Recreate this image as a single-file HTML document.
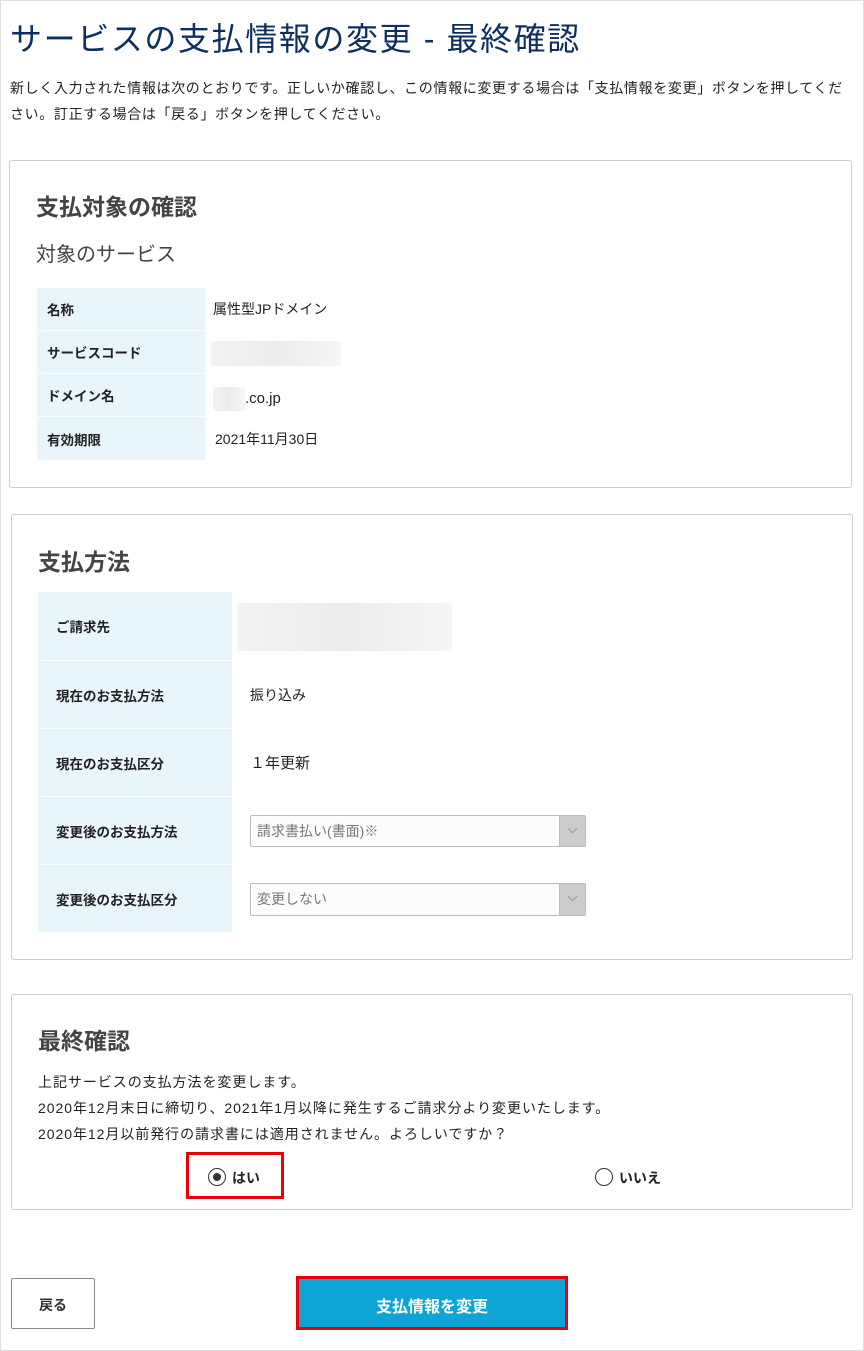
<!DOCTYPE html>
<html><head><meta charset="utf-8"><style>
*{margin:0;padding:0;box-sizing:border-box}
body{width:864px;height:1351px;position:relative;background:#fff;font-family:"Liberation Sans","Noto Sans CJK JP",sans-serif;color:#222;overflow:hidden}
.frame{position:absolute;left:0;top:0;width:864px;height:1351px;border:1px solid #ddd}
.a{position:absolute;white-space:nowrap}
h1{position:absolute;left:10px;top:19px;font-size:32px;letter-spacing:1.6px;font-weight:normal;color:#0c2f5e;line-height:40px}
.p{left:10px;font-size:14px;letter-spacing:0.65px;line-height:26px}
.box{position:absolute;border:1px solid #ccc;border-radius:3px}
.h2{font-size:23px;font-weight:bold;color:#444}
.h3{font-size:20px;color:#444}
.lab{position:absolute;background:#e8f6fc;font-size:13.5px;font-weight:bold;padding-left:10px;display:flex;align-items:center}
.val{position:absolute;font-size:14px;display:flex;align-items:center}
.sel{position:absolute;border:1px solid #bbb;border-radius:2px;background:#fcfcfc;font-size:14px;color:#777;padding-left:6px;line-height:30px}
.sel i{position:absolute;right:0;top:0;width:26px;height:100%;background:#ccc;border-left:1px solid #bbb}
.sel i:after{content:"";position:absolute;left:9px;top:9px;width:6px;height:6px;border-right:1px solid #999;border-bottom:1px solid #999;transform:rotate(45deg)}
.blur{position:absolute;background:linear-gradient(90deg,#f3f3f3,#ececec,#f6f6f6)}
.radio{position:absolute;width:18px;height:18px;border:1px solid #333;border-radius:50%;background:#fff}
</style></head><body>
<div class="frame"></div>
<h1>サービスの支払情報の変更 - 最終確認</h1>
<div class="a p" style="top:75px">新しく入力された情報は次のとおりです。正しいか確認し、この情報に変更する場合は「支払情報を変更」ボタンを押してくだ</div>
<div class="a p" style="top:101px">さい。訂正する場合は「戻る」ボタンを押してください。</div>

<div class="box" style="left:9px;top:160px;width:843px;height:328px"></div>
<div class="a h2" style="left:36px;top:188px">支払対象の確認</div>
<div class="a h3" style="left:36px;top:238px">対象のサービス</div>
<div class="lab" style="left:37px;top:288px;width:168px;height:42px">名称</div>
<div class="lab" style="left:37px;top:331px;width:168px;height:42px">サービスコード</div>
<div class="lab" style="left:37px;top:374px;width:168px;height:42px">ドメイン名</div>
<div class="lab" style="left:37px;top:417px;width:168px;height:43px">有効期限</div>
<div class="val" style="left:213px;top:288px;height:42px">属性型JPドメイン</div>
<div class="blur" style="left:211px;top:341px;width:130px;height:25px"></div>
<div class="blur" style="left:213px;top:387px;width:32px;height:24px"></div>
<div class="val" style="left:245px;top:377px;height:42px;font-size:15px">.co.jp</div>
<div class="val" style="left:215px;top:417px;height:43px">2021年11月30日</div>

<div class="box" style="left:11px;top:514px;width:842px;height:446px"></div>
<div class="a h2" style="left:38px;top:543px">支払方法</div>
<div class="lab" style="left:38px;top:592px;width:194px;height:68px;padding-left:18px">ご請求先</div>
<div class="lab" style="left:38px;top:661px;width:194px;height:67px;padding-left:18px">現在のお支払方法</div>
<div class="lab" style="left:38px;top:729px;width:194px;height:67px;padding-left:18px">現在のお支払区分</div>
<div class="lab" style="left:38px;top:797px;width:194px;height:67px;padding-left:18px">変更後のお支払方法</div>
<div class="lab" style="left:38px;top:865px;width:194px;height:67px;padding-left:18px">変更後のお支払区分</div>
<div class="blur" style="left:237px;top:603px;width:215px;height:48px"></div>
<div class="val" style="left:250px;top:661px;height:67px">振り込み</div>
<div class="val" style="left:250px;top:729px;height:67px;font-size:15px">１年更新</div>
<div class="sel" style="left:250px;top:815px;width:336px;height:32px">請求書払い(書面)※<i></i></div>
<div class="sel" style="left:250px;top:883px;width:336px;height:33px">変更しない<i></i></div>

<div class="box" style="left:11px;top:994px;width:842px;height:216px"></div>
<div class="a h2" style="left:38px;top:1022px">最終確認</div>
<div class="a" style="left:38px;top:1069px;font-size:14px;letter-spacing:0.95px;line-height:26px">上記サービスの支払方法を変更します。<br>2020年12月末日に締切り、2021年1月以降に発生するご請求分より変更いたします。<br>2020年12月以前発行の請求書には適用されません。よろしいですか？</div>
<div class="a" style="left:186px;top:1152px;width:98px;height:47px;border:3px solid #e8000b"></div>
<div class="radio" style="left:208px;top:1168px"><div style="position:absolute;left:4px;top:4px;width:8px;height:8px;border-radius:50%;background:#333"></div></div>
<div class="a" style="left:232px;top:1168px;font-size:14px;font-weight:bold">はい</div>
<div class="radio" style="left:595px;top:1168px"></div>
<div class="a" style="left:619px;top:1168px;font-size:14px;font-weight:bold">いいえ</div>

<div class="a" style="left:11px;top:1278px;width:84px;height:51px;border:1px solid #888;border-radius:2px;font-size:14px;font-weight:bold;color:#333;text-align:center;line-height:52px">戻る</div>
<div class="a" style="left:296px;top:1276px;width:272px;height:54px;border:3px solid #e8000b;background:#0ea5d6;color:#fff;font-size:16px;font-weight:bold;text-align:center;line-height:58px">支払情報を変更</div>
</body></html>
